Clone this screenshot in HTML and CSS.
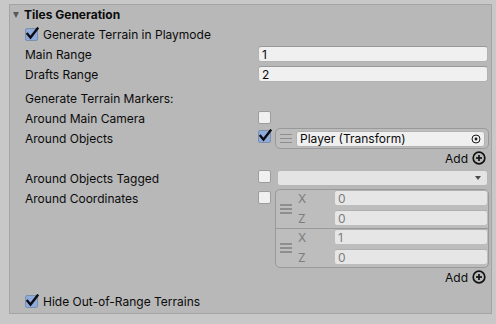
FILE: index.html
```html
<!DOCTYPE html>
<html>
<head>
<meta charset="utf-8">
<link rel="stylesheet" href="styles.css">
</head>
<body>
<div class="panel">
  <div class="header"><span class="fold"></span>Tiles Generation</div>

  <div class="row check-row">
    <span class="cb checked"><svg viewBox="0 0 14 14" width="14" height="14"><polyline points="2.5,7 5.5,10.5 12.5,1.5" /></svg></span>
    <span class="ctext">Generate Terrain in Playmode</span>
  </div>

  <div class="row"><div class="label">Main Range</div><div class="val"><div class="field">1</div></div></div>
  <div class="row"><div class="label">Drafts Range</div><div class="val"><div class="field">2</div></div></div>

  <div class="row section"><div class="label">Generate Terrain Markers:</div></div>

  <div class="row"><div class="label">Around Main Camera</div><div class="val"><span class="cb cb-val"></span></div></div>

  <div class="row row-obj">
    <div class="label">Around Objects</div>
    <div class="val">
      <span class="cb checked cb-val"><svg viewBox="0 0 14 14" width="14" height="14"><polyline points="2.5,7 5.5,10.5 12.5,1.5" /></svg></span>
      <div class="list obj-list">
        <div class="element obj-el">
          <span class="handle"><i></i><i></i><i></i></span>
          <div class="objfield"><span>Player (Transform)</span>
            <svg class="picker" viewBox="0 0 10 10" width="10" height="10"><circle cx="5" cy="5" r="4" /><circle class="dot" cx="5" cy="5" r="1.4" /></svg>
          </div>
        </div>
      </div>
    </div>
  </div>
  <div class="addrow"><span>Add</span><svg viewBox="0 0 14 14" width="14" height="14" class="addicon"><circle cx="7" cy="7" r="5.8" /><line x1="7" y1="4" x2="7" y2="10" /><line x1="4" y1="7" x2="10" y2="7" /></svg></div>

  <div class="row row-tag">
    <div class="label">Around Objects Tagged</div>
    <div class="val">
      <span class="cb cb-val"></span>
      <div class="dropdown"><span class="arrow"></span></div>
    </div>
  </div>

  <div class="row row-coords">
    <div class="label">Around Coordinates</div>
    <div class="val">
      <span class="cb cb-val cb-coord"></span>
      <div class="list coord-list">
        <div class="element coord-el">
          <span class="handle"><i></i><i></i><i></i></span>
          <div class="pairs">
            <div class="pair"><span class="axis">X</span><div class="field dim">0</div></div>
            <div class="pair"><span class="axis">Z</span><div class="field dim">0</div></div>
          </div>
        </div>
        <div class="element coord-el second">
          <span class="handle"><i></i><i></i><i></i></span>
          <div class="pairs">
            <div class="pair"><span class="axis">X</span><div class="field dim">1</div></div>
            <div class="pair"><span class="axis">Z</span><div class="field dim">0</div></div>
          </div>
        </div>
      </div>
    </div>
  </div>
  <div class="addrow addrow2"><span>Add</span><svg viewBox="0 0 14 14" width="14" height="14" class="addicon"><circle cx="7" cy="7" r="5.8" /><line x1="7" y1="4" x2="7" y2="10" /><line x1="4" y1="7" x2="10" y2="7" /></svg></div>

  <div class="row check-row hide-row">
    <span class="cb checked"><svg viewBox="0 0 14 14" width="14" height="14"><polyline points="2.5,7 5.5,10.5 12.5,1.5" /></svg></span>
    <span class="ctext">Hide Out-of-Range Terrains</span>
  </div>
</div>
</body>
</html>
```

FILE: styles.css
```css
* { box-sizing: border-box; }

body {
  margin: 0;
  background: #c8c8c8;
  font-family: Inter, "Noto Sans", sans-serif;
  font-size: 12px;
  color: #0b0b0b;
}

.panel {
  margin: 4px 4px 0 9px;
  height: 310px;
  background: #b8b8b8;
  border: 1px solid #a4a4a4;
  padding: 0 3px 0 3px;
}

.header {
  height: 19px;
  display: flex;
  align-items: center;
  font-weight: 700;
  padding-left: 0;
}

.fold {
  width: 0;
  height: 0;
  border-left: 3.5px solid transparent;
  border-right: 3.5px solid transparent;
  border-top: 6px solid #5a5a5a;
  margin-right: 5px;
}

.row {
  display: flex;
  height: 20px;
  padding-left: 12px;
  align-items: flex-start;
}

.label {
  width: 233px;
  flex: none;
  line-height: 20px;
  padding-top: 1px;
  white-space: nowrap;
}

.val {
  flex: 1;
  display: flex;
  align-items: flex-start;
  min-width: 0;
}

.check-row {
  align-items: center;
}

.check-row .cb {
  margin-right: 5px;
}

.ctext {
  padding-top: 1px;
}

.section {
  margin-top: 4px;
}

.cb {
  position: relative;
  width: 13px;
  height: 13px;
  flex: none;
  background: #f0f0f0;
  border: 1px solid #9c9c9c;
  border-radius: 2px;
}

.cb.checked {
  background: #8fabd9;
  border-color: #7b8fae;
}

.cb svg {
  position: absolute;
  left: -1px;
  top: -2px;
}

.cb svg polyline {
  fill: none;
  stroke: #0c0c14;
  stroke-width: 2.4;
  stroke-linecap: square;
  stroke-linejoin: miter;
}

.cb-val {
  margin-top: 3px;
}

.field {
  flex: 1;
  height: 16px;
  margin-top: 2px;
  background: #f0f0f0;
  border: 1px solid #b2b2b2;
  border-top-color: #999;
  border-radius: 3px;
  padding-left: 3px;
  line-height: 16px;
}

.field.dim {
  margin-top: 0;
  background: #e6e6e6;
  border-color: #bdbdbd;
  border-top-color: #b0b0b0;
  color: #7d7d7d;
}

/* object list */
.row-obj {
  height: 21px;
}

.row-obj .cb-val {
  margin-top: 2px;
}

.list {
  flex: 1;
  margin-left: 4px;
  margin-right: -1px;
  border: 1px solid #999;
  border-radius: 5px;
  background: #bdbdbd;
}

.obj-list {
  height: 21px;
}

.element {
  display: flex;
  align-items: center;
}

.obj-el {
  height: 19px;
  padding-right: 3px;
}

.handle {
  width: 12px;
  margin-left: 4px;
  margin-right: 4px;
  display: flex;
  flex-direction: column;
  gap: 2.5px;
  flex: none;
}

.handle i {
  display: block;
  height: 1.5px;
  background: #8e8e8e;
}

.objfield {
  flex: 1;
  height: 16px;
  background: #f0f0f0;
  border: 1px solid #b2b2b2;
  border-radius: 3px;
  display: flex;
  align-items: center;
  justify-content: space-between;
  padding: 1px 2px 0 3px;
  line-height: 14px;
}

.picker {
  margin-right: 1px;
  margin-top: -1px;
}

.picker circle {
  fill: none;
  stroke: #1a1a1a;
  stroke-width: 1;
}

.picker .dot {
  fill: #1a1a1a;
  stroke: none;
}

.addrow {
  height: 18px;
  display: flex;
  justify-content: flex-end;
  align-items: center;
  gap: 4px;
  padding-right: 2px;
  margin-bottom: 1px;
}

.addrow span {
  padding-top: 1px;
}

.addicon circle {
  fill: none;
  stroke: #111;
  stroke-width: 1.7;
}

.addicon line {
  stroke: #111;
  stroke-width: 1.7;
}

/* tagged */
.row-tag .cb-val {
  margin-top: 2px;
}

.dropdown {
  flex: 1;
  height: 16px;
  margin-top: 2px;
  margin-left: 6px;
  background: #e4e4e4;
  border: 1px solid #b6b6b6;
  border-radius: 3px;
  display: flex;
  align-items: center;
  justify-content: flex-end;
  padding-right: 6px;
}

.arrow {
  width: 0;
  height: 0;
  border-left: 3.5px solid transparent;
  border-right: 3.5px solid transparent;
  border-top: 4px solid #4a4a4a;
}

/* coordinates */
.row-coords {
  height: 80px;
}

.coord-list {
  margin-top: 1px;
  height: 79px;
}

.coord-el {
  height: 38px;
}

.coord-el.second {
  border-top: 1px solid #999;
  height: 39px;
}

.pairs {
  flex: 1;
  display: flex;
  flex-direction: column;
  gap: 4px;
  align-self: flex-start;
  padding-right: 0;
}

.pair {
  display: flex;
  height: 16px;
  align-items: center;
}

.axis {
  width: 38px;
  flex: none;
  padding-left: 2px;
  padding-top: 1px;
  color: #7d7d7d;
}

.hide-row {
  margin-top: 5px;
}
```
